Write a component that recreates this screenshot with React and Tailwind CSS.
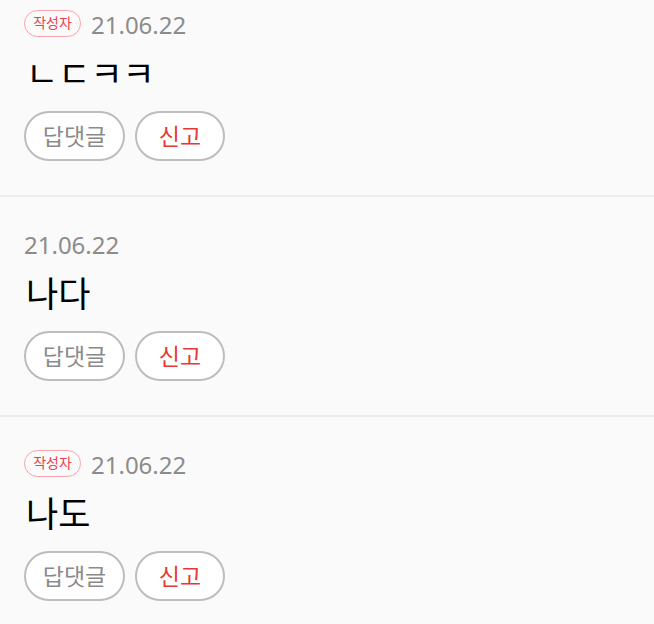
import React from "react";

const comments = [
  { id: 1, mine: true, date: "21.06.22", text: "ㄴㄷㅋㅋ" },
  { id: 2, mine: false, date: "21.06.22", text: "나다" },
  { id: 3, mine: true, date: "21.06.22", text: "나도" },
];

function CommentItem({ c }) {
  return (
    <div className="border-b-2 border-[#ececec] px-6 pt-8 pb-[34px]">
      <div className="flex h-[28px] items-center">
        {c.mine && (
          <span className="mr-[10px] flex h-[27px] w-[57px] items-center justify-center rounded-full border border-[#f6a3ab] text-[14px] leading-none text-[#e8404c]">
            작성자
          </span>
        )}
        <span className="mt-[4px] text-[24px] leading-none text-[#8c8c8c]">{c.date}</span>
      </div>
      <div className="mt-[10px] pl-[2px] text-[35px] leading-[54px] text-black">{c.text}</div>
      <div className="mt-[10px] flex gap-[10px]">
        <button className="flex h-[50px] w-[101px] items-center justify-center rounded-full border-2 border-[#bdbdbd] bg-white text-[23px] text-[#8a8a8a]">
          답댓글
        </button>
        <button className="flex h-[50px] w-[90px] items-center justify-center rounded-full border-2 border-[#bdbdbd] bg-white text-[23px] text-[#e53935]">
          신고
        </button>
      </div>
    </div>
  );
}

export default function App() {
  return (
    <div className="h-screen overflow-hidden bg-[#fafafa] font-['Noto_Sans','Noto_Sans_CJK_KR',sans-serif]">
      <div className="-mt-[23px]">
        {comments.map((c) => (
          <CommentItem key={c.id} c={c} />
        ))}
      </div>
    </div>
  );
}
